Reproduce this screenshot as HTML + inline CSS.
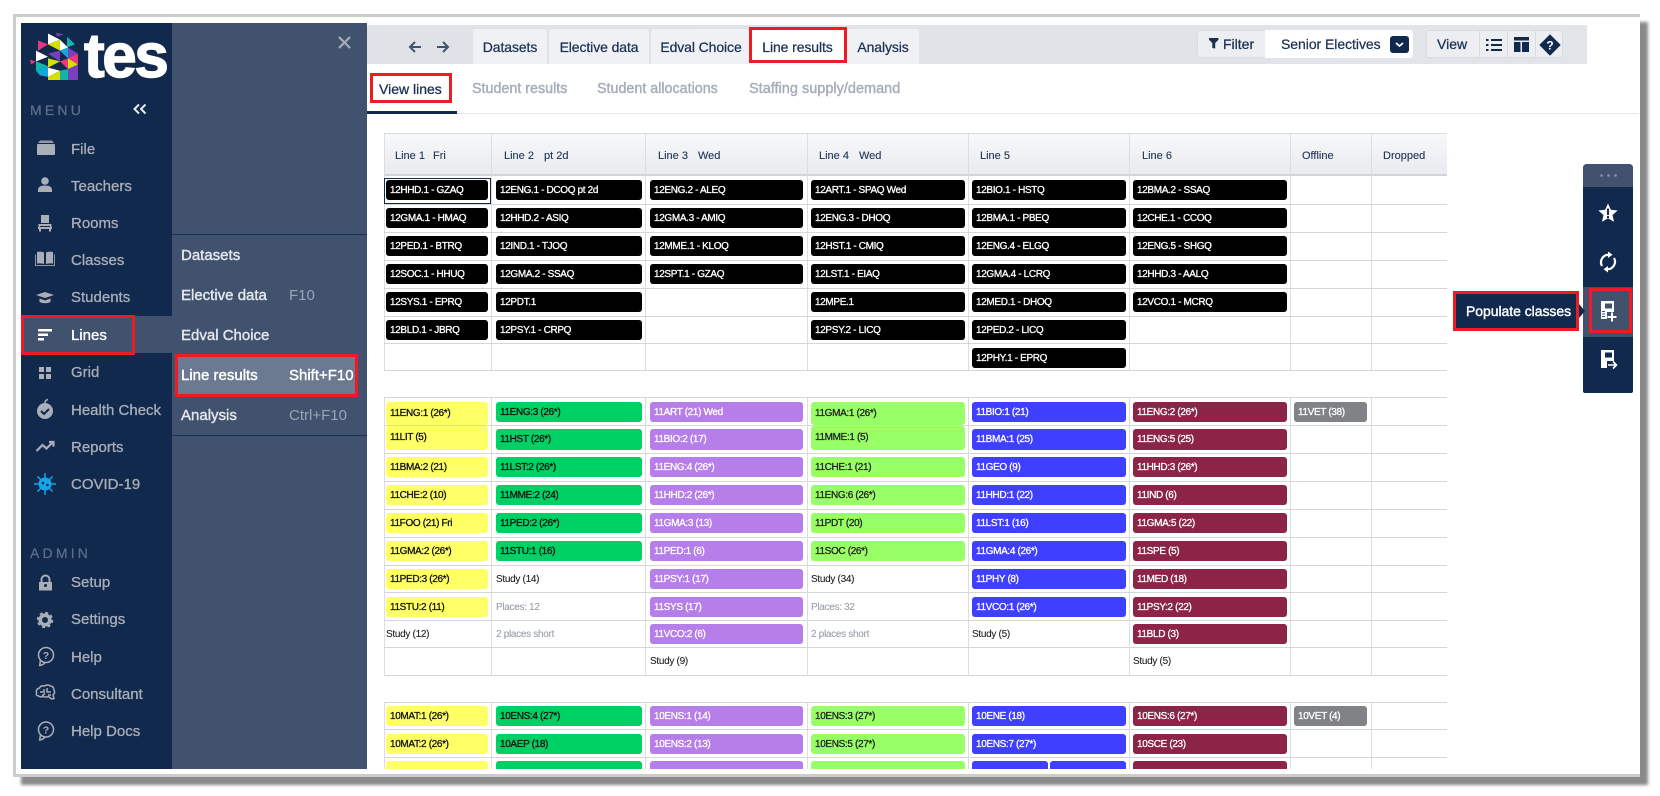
<!DOCTYPE html>
<html><head><meta charset="utf-8"><style>
html,body{margin:0;padding:0;background:#fff;width:1660px;height:796px;overflow:hidden;font-family:"Liberation Sans",sans-serif}
div,span,i,b{position:absolute;white-space:nowrap;box-sizing:border-box;font-style:normal;font-weight:normal}
svg{position:absolute;overflow:visible}
.frame{left:13px;top:14px;width:1627px;height:763px;background:#fff;border:3px solid #ccc;border-right:none;box-shadow:8px 8px 3px #8a8a8a}
.side{left:21px;top:23px;width:151px;height:746px;background:#11294d}
.sub{left:172px;top:23px;width:195px;height:746px;background:#41526e}
.n{left:71px;font-size:15px;line-height:20px;color:#a9aeb8;-webkit-text-stroke:.3px #a9aeb8}
.h{font-size:14px;letter-spacing:3.2px;color:#5f708b;left:30px;line-height:18px;-webkit-text-stroke:.2px #5f708b}
.s{left:181px;font-size:15px;line-height:20px;color:#e4e7ec;-webkit-text-stroke:.4px #e4e7ec}
.k{left:289px;font-size:15px;line-height:20px;color:#9aa5b6}
.red{border:3px solid #ed1c24;background:none}
.tab{top:29px;height:35px;background:#eff1f4;border-radius:3px 3px 0 0;font-size:14px;letter-spacing:-.1px;line-height:36px;text-align:center;color:#1b3054;-webkit-text-stroke:.25px #1b3054}
.st{top:79px;font-size:14.3px;line-height:20px;color:#a5adba;-webkit-text-stroke:.4px #a5adba}
.tb{font-size:14px;line-height:28px;color:#1b3054;-webkit-text-stroke:.25px #1b3054;top:30px}
.clip{left:384px;top:133px;width:1063px;height:636px;overflow:hidden}
.hd{left:0;top:0;width:1063px;height:43px;background:linear-gradient(#f7f8f9,#e9ebef);border-top:1px solid #ddd;border-bottom:2px solid #d3d5d9}
.hd span{top:12px;font-size:11px;line-height:20px;color:#1b3054;-webkit-text-stroke:.1px #1b3054}
.v{width:1px;background:#ddd}
.l{left:0;width:1063px;height:1px;background:#d6d6d6}
.p{height:20px;border-radius:3px;font-size:10px;letter-spacing:-.35px;line-height:21px;padding-left:4px;-webkit-text-stroke:.3px currentColor}
.t{height:20px;font-size:10px;letter-spacing:-.3px;line-height:21px;color:#222;-webkit-text-stroke:.1px currentColor}
.g{color:#9aa0a8}
.c1{left:2px;width:102px}.c2{left:112px;width:146px}.c3{left:266px;width:153px}.c4{left:427px;width:154px}.c5{left:588px;width:154px}.c6{left:749px;width:154px}.c7{left:910px;width:73px}
.K{background:#000;color:#fff}.Y{background:#ffff66;color:#111}.G{background:#00d164;color:#111}.U{background:#b67ee8;color:#fff}.L{background:#99ff66;color:#222}.B{background:#3f3fff;color:#fff}.M{background:#8b2447;color:#fff}.A{background:#808285;color:#fff}
</style></head><body>
<div class="frame"></div>
<div class="side"></div><div class="sub"></div>
<div style="left:172px;top:234px;width:195px;height:1px;background:#1a2f52"></div>
<div style="left:172px;top:435px;width:195px;height:1px;background:#1a2f52"></div>

<!-- logo -->
<svg style="left:30px;top:32px" width="48" height="48" viewBox="0 0 48 62" preserveAspectRatio="none">
<polygon points="18,2 30,10 18,16" fill="#fff"/><polygon points="26,1 34,3 27,6" fill="#7a3fc0"/>
<polygon points="37,6 45,16 37,20" fill="#12b5a8"/><polygon points="8,11 18,16 8,24" fill="#e8397f"/>
<polygon points="18,16 30,10 30,24" fill="#d6e000"/><polygon points="30,10 38,20 30,24" fill="#fff"/>
<polygon points="38,20 48,28 38,34" fill="#7a3fc0"/><polygon points="30,24 38,20 38,34" fill="#12a8d8"/>
<polygon points="6,24 18,32 6,38" fill="#fff"/><polygon points="18,28 30,24 30,38" fill="#7a3fc0"/>
<polygon points="38,34 48,28 48,42" fill="#e8397f"/>
<polygon points="0,36 6,38 1,42" fill="#e8397f"/><polygon points="6,38 18,44 6,50" fill="#12b5a8"/>
<polygon points="18,34 30,38 18,46" fill="#d6e000"/><polygon points="30,38 38,34 38,48" fill="#e8397f"/>
<polygon points="38,34 48,42 38,48" fill="#d6e000"/><polygon points="6,50 18,44 18,58 10,56" fill="#12a8d8"/>
<polygon points="18,46 30,50 18,58" fill="#fff"/><polygon points="30,50 38,48 38,62 30,62" fill="#12b5a8"/>
<polygon points="38,48 48,42 48,62 38,62" fill="#7a3fc0"/><polygon points="18,58 30,50 30,62 18,62" fill="#d6e000"/>
</svg>
<div style="left:84px;top:24px;font-size:62px;font-weight:bold;line-height:66px;color:#fff;letter-spacing:-2.4px;-webkit-text-stroke:1.4px #fff">tes</div>

<div class="h" style="top:101px">MENU</div>
<svg style="left:133px;top:103px" width="14" height="12" fill="none" stroke="#e8eaee" stroke-width="2"><path d="M6 1.500 1.500 6 6 10.500M12.500 1.500 8 6l4.500 4.500"/></svg>

<div style="left:21px;top:316px;width:151px;height:37px;background:#41526e"></div>

<div class="n" style="top:140px">File</div>
<div class="n" style="top:177px">Teachers</div>
<div class="n" style="top:214px">Rooms</div>
<div class="n" style="top:251px">Classes</div>
<div class="n" style="top:288px">Students</div>
<div class="n" style="top:326px;color:#fff;-webkit-text-stroke:.35px #fff">Lines</div>
<div class="n" style="top:363px">Grid</div>
<div class="n" style="top:401px">Health Check</div>
<div class="n" style="top:438px">Reports</div>
<div class="n" style="top:475px">COVID-19</div>
<div class="h" style="top:544px">ADMIN</div>
<div class="n" style="top:573px">Setup</div>
<div class="n" style="top:610px">Settings</div>
<div class="n" style="top:648px">Help</div>
<div class="n" style="top:685px">Consultant</div>
<div class="n" style="top:722px">Help Docs</div>

<svg style="left:0;top:0" width="172" height="769" fill="#a9aeb8">
<!-- file --><path d="M37 145q0-1 1-1h16q1 0 1 1v9q0 1-1 1H38q-1 0-1-1z"/><path d="M38 143l2-2.500h12l2 2.500z" opacity=".85"/>
<!-- teachers --><circle cx="45" cy="181" r="3.800"/><path d="M38 192v-2q0-4.500 7-4.500t7 4.500v2z"/>
<!-- rooms --><path d="M41 215h8v8h-8zM40 224h10v2h-10zM38 227h14v2h-14zM39 229h2v2.500h-2zM49 229h2v2.500h-2zM38.500 224h1.500v3h-1.500zM50 224h1.500v3H50z"/>
<!-- classes --><path d="M37 252q4-1 7 .5V264q-3-1-7-.5zM53 252q-4-1-7 .5V264q3-1 7-.5z"/><path d="M35.500 254.500v11h8.500M54.500 254.500v11H46" fill="none" stroke="#8f95a1" stroke-width="1"/><path d="M44 265.500h2" stroke="#8f95a1"/>
<!-- students --><path d="M36 295l9-3 9 3-9 3z"/><path d="M39.500 298.500l5.500 2 5.500-2v3.500q-5.500 2.500-11 0z"/>
<!-- lines --><path fill="#fff" d="M38 329h14v2.500H38zM38 333.500h10V336H38zM38 338h6v2.500h-6z"/>
<!-- grid --><path d="M39 367h5v5h-5zM46 367h5v5h-5zM39 374h5v5h-5zM46 374h5v5h-5z"/>
<!-- health --><circle cx="45" cy="411" r="8"/><path d="M45 403q0-3 3-3.500" stroke="#a9aeb8" fill="none" stroke-width="1.500"/><path d="M41 411l3 3 5-5" stroke="#11294d" fill="none" stroke-width="2"/>
<!-- reports --><path d="M36.500 451l6-6 4 3.500 6-6M49 442h4.500v4.500" fill="none" stroke="#a9aeb8" stroke-width="2.200"/>
<!-- covid --><g stroke="#14a6e8" stroke-width="1.500"><path d="M45 473v22M34 484h22M37.500 476.500l15 15M52.500 476.500l-15 15"/></g><circle cx="45" cy="484" r="6.500" fill="#14a6e8"/><circle cx="43" cy="483" r="1.300" fill="#11294d"/><circle cx="47.500" cy="485" r="1.300" fill="#11294d"/>
<!-- setup --><path d="M39 582h13v8.500H39z"/><path d="M41.500 582v-2.500a4 4 0 0 1 8 0V582" fill="none" stroke="#a9aeb8" stroke-width="2"/><circle cx="45.500" cy="585.500" r="1.500" fill="#11294d"/>
<!-- settings --><circle cx="45" cy="620" r="4.800" fill="none" stroke="#a9aeb8" stroke-width="3.600"/><circle cx="45" cy="620" r="7.300" fill="none" stroke="#a9aeb8" stroke-width="1.800" stroke-dasharray="3 2.730"/>
<!-- help --><g fill="none" stroke="#a9aeb8" stroke-width="1.500"><circle cx="46" cy="655" r="7.500"/><path d="M40.500 660l-.800 5.500q3.500-.5 5.500-3"/></g><text x="46" y="659" font-size="10.500" font-weight="bold" text-anchor="middle" font-family="Liberation Sans">?</text>
<!-- consultant --><g fill="none" stroke="#a9aeb8" stroke-width="1.500"><path d="M36.500 693q-1-4 3-5 1.500-3 5-2 3-2 6 0 3.500 .5 3.500 4 1.500 3-1 5l1 3.500-2.500 .5-3-2.500q-3 1-5 0-3 1-5-.5-3-.5-2-3z"/><path d="M40 692h4v-3M47 688v4h4M42 696l3-2.500M48 695h3"/></g>
<!-- help docs --><g fill="none" stroke="#a9aeb8" stroke-width="1.500"><circle cx="46" cy="729.500" r="7.500"/><path d="M40.500 734.500l-.800 5.500q3.500-.5 5.500-3"/></g><text x="46" y="733.500" font-size="10.500" font-weight="bold" text-anchor="middle" font-family="Liberation Sans">?</text>
</svg>

<div class="red" style="left:21px;top:315px;width:114px;height:40px"></div>

<svg style="left:338px;top:36px" width="13" height="13" stroke="#a5adba" stroke-width="2.200" fill="none"><path d="M1 1l11 11M12 1L1 12"/></svg>

<div class="s" style="top:246px">Datasets</div>
<div class="s" style="top:286px">Elective data</div><div class="k" style="top:286px">F10</div>
<div class="s" style="top:326px">Edval Choice</div>
<div style="left:175px;top:354px;width:183px;height:43px;background:#6b7a91"></div>
<div class="s" style="top:366px;color:#fff;-webkit-text-stroke:.4px #fff">Line results</div><div class="k" style="top:366px;color:#fff;-webkit-text-stroke:.4px #fff">Shift+F10</div>
<div class="red" style="left:175px;top:354px;width:183px;height:43px"></div>
<div class="s" style="top:406px">Analysis</div><div class="k" style="top:406px">Ctrl+F10</div>

<!-- top bar -->
<div style="left:367px;top:25px;width:1220px;height:39px;background:linear-gradient(90deg,#dfe2e7,#e1e4e9)"></div>
<svg style="left:408px;top:40px" width="42" height="14" fill="none" stroke="#42526e" stroke-width="2"><path d="M13 7H2M7 2 2 7l5 5M29 7h11M35 2l5 5-5 5"/></svg>
<div class="tab" style="left:473px;width:74px">Datasets</div>
<div class="tab" style="left:549px;width:100px">Elective data</div>
<div class="tab" style="left:651px;width:98px;padding-left:2px">Edval Choice</div>
<div class="tab" style="left:749px;width:97px;background:#fff">Line results</div>
<div class="tab" style="left:847px;width:72px">Analysis</div>
<div class="red" style="left:749px;top:27px;width:98px;height:36px"></div>

<div style="left:1197px;top:30px;width:69px;height:28px;background:#eceef1;border:1px solid #d8dbe0;border-radius:3px 0 0 3px"></div>
<div style="left:1265px;top:30px;width:148px;height:28px;background:#fff;border-radius:0 3px 3px 0"></div>
<svg style="left:1209px;top:38px" width="10" height="11" fill="#1b3054"><path d="M0 0h9.500v1.800L6.200 5v5.500L3.300 10V5L0 1.800z"/></svg>
<div class="tb" style="left:1223px">Filter</div>
<div class="tb" style="left:1281px;letter-spacing:-.05px">Senior Electives</div>
<div style="left:1390px;top:36px;width:19px;height:17px;background:#11294d;border-radius:3px"></div>
<svg style="left:1395px;top:42px" width="9" height="6" fill="none" stroke="#fff" stroke-width="1.800"><path d="M1 1l3.500 3L8 1"/></svg>
<div style="left:1426px;top:30px;width:137px;height:28px;background:#eceef1;border:1px solid #d8dbe0;border-radius:3px"></div>
<div style="left:1479px;top:30px;width:1px;height:28px;background:#d8dbe0"></div>
<div style="left:1507px;top:30px;width:1px;height:28px;background:#d8dbe0"></div>
<div style="left:1535px;top:30px;width:1px;height:28px;background:#d8dbe0"></div>
<div class="tb" style="left:1437px">View</div>
<svg style="left:1486px;top:38px" width="16" height="14" fill="#11294d"><path d="M5 1h11v2H5zM5 6h11v2H5zM5 11h11v2H5zM0 1h2.500v2H0zM0 6h2.500v2H0zM0 11h2.500v2H0z"/></svg>
<svg style="left:1514px;top:37px" width="15" height="15" fill="#11294d"><path d="M0 0h15v3.500H0zM0 5h6.500v10H0zM8 5h7v10H8z"/></svg>
<svg style="left:1540px;top:35px" width="20" height="20"><path d="M10 0l10 10-10 10L0 10z" fill="#11294d" stroke="#11294d" stroke-linejoin="round"/><text x="10" y="14.500" font-size="12" font-weight="bold" fill="#fff" text-anchor="middle" font-family="Liberation Sans">?</text></svg>

<!-- sub tabs -->
<div class="st" style="left:379px;font-size:14px;color:#1b3054;-webkit-text-stroke:.3px #1b3054">View lines</div>
<div class="st" style="left:472px">Student results</div>
<div class="st" style="left:597px">Student allocations</div>
<div class="st" style="left:749px;font-size:14.5px">Staffing supply/demand</div>
<div style="left:367px;top:113px;width:1272px;height:1px;background:#e4e6ea"></div>
<div style="left:367px;top:111px;width:90px;height:3px;background:#11294d"></div>
<div class="red" style="left:370px;top:73px;width:82px;height:30px"></div>

<!-- tables -->
<div class="clip">
<div class="hd">
<span style="left:11px">Line 1</span><span style="left:49px">Fri</span>
<span style="left:120px">Line 2</span><span style="left:160px">pt 2d</span>
<span style="left:274px">Line 3</span><span style="left:314px">Wed</span>
<span style="left:435px">Line 4</span><span style="left:475px">Wed</span>
<span style="left:596px">Line 5</span>
<span style="left:758px">Line 6</span>
<span style="left:918px">Offline</span>
<span style="left:999px">Dropped</span>
</div>
<!-- vertical lines -->
<div class="v" style="left:0;top:0;height:238px"></div>
<div class="v" style="left:107px;top:0;height:238px"></div><div class="v" style="left:261px;top:0;height:238px"></div><div class="v" style="left:423px;top:0;height:238px"></div><div class="v" style="left:584px;top:0;height:238px"></div><div class="v" style="left:745px;top:0;height:238px"></div><div class="v" style="left:906px;top:0;height:238px"></div><div class="v" style="left:987px;top:0;height:238px"></div>
<div class="v" style="left:0;top:264px;height:278px"></div>
<div class="v" style="left:107px;top:264px;height:278px"></div><div class="v" style="left:261px;top:264px;height:278px"></div><div class="v" style="left:423px;top:264px;height:278px"></div><div class="v" style="left:584px;top:264px;height:278px"></div><div class="v" style="left:745px;top:264px;height:278px"></div><div class="v" style="left:906px;top:264px;height:278px"></div><div class="v" style="left:987px;top:264px;height:278px"></div>
<div class="v" style="left:0;top:569px;height:67px"></div>
<div class="v" style="left:107px;top:569px;height:67px"></div><div class="v" style="left:261px;top:569px;height:67px"></div><div class="v" style="left:423px;top:569px;height:67px"></div><div class="v" style="left:584px;top:569px;height:67px"></div><div class="v" style="left:745px;top:569px;height:67px"></div><div class="v" style="left:906px;top:569px;height:67px"></div><div class="v" style="left:987px;top:569px;height:67px"></div>
<!-- horizontal lines -->
<div class="l" style="top:71px"></div><div class="l" style="top:99px"></div><div class="l" style="top:127px"></div><div class="l" style="top:155px"></div><div class="l" style="top:183px"></div><div class="l" style="top:210px"></div><div class="l" style="top:237px"></div>
<div class="l" style="top:264px"></div><div class="l" style="top:292px"></div><div class="l" style="top:320px"></div><div class="l" style="top:348px"></div><div class="l" style="top:376px"></div><div class="l" style="top:404px"></div><div class="l" style="top:432px"></div><div class="l" style="top:459px"></div><div class="l" style="top:487px"></div><div class="l" style="top:514px"></div><div class="l" style="top:542px"></div>
<div class="l" style="top:569px"></div><div class="l" style="top:596px"></div><div class="l" style="top:624px"></div>

<!-- table 1 -->
<div style="left:0;top:45px;width:107px;height:26px;border:1px solid #11294d"></div>
<div class="p K c1" style="top:47px">12HHD.1 - GZAQ</div><div class="p K c2" style="top:47px">12ENG.1 - DCOQ pt 2d</div><div class="p K c3" style="top:47px">12ENG.2 - ALEQ</div><div class="p K c4" style="top:47px">12ART.1 - SPAQ Wed</div><div class="p K c5" style="top:47px">12BIO.1 - HSTQ</div><div class="p K c6" style="top:47px">12BMA.2 - SSAQ</div>
<div class="p K c1" style="top:75px">12GMA.1 - HMAQ</div><div class="p K c2" style="top:75px">12HHD.2 - ASIQ</div><div class="p K c3" style="top:75px">12GMA.3 - AMIQ</div><div class="p K c4" style="top:75px">12ENG.3 - DHOQ</div><div class="p K c5" style="top:75px">12BMA.1 - PBEQ</div><div class="p K c6" style="top:75px">12CHE.1 - CCOQ</div>
<div class="p K c1" style="top:103px">12PED.1 - BTRQ</div><div class="p K c2" style="top:103px">12IND.1 - TJOQ</div><div class="p K c3" style="top:103px">12MME.1 - KLOQ</div><div class="p K c4" style="top:103px">12HST.1 - CMIQ</div><div class="p K c5" style="top:103px">12ENG.4 - ELGQ</div><div class="p K c6" style="top:103px">12ENG.5 - SHGQ</div>
<div class="p K c1" style="top:131px">12SOC.1 - HHUQ</div><div class="p K c2" style="top:131px">12GMA.2 - SSAQ</div><div class="p K c3" style="top:131px">12SPT.1 - GZAQ</div><div class="p K c4" style="top:131px">12LST.1 - EIAQ</div><div class="p K c5" style="top:131px">12GMA.4 - LCRQ</div><div class="p K c6" style="top:131px">12HHD.3 - AALQ</div>
<div class="p K c1" style="top:159px">12SYS.1 - EPRQ</div><div class="p K c2" style="top:159px">12PDT.1</div><div class="p K c4" style="top:159px">12MPE.1</div><div class="p K c5" style="top:159px">12MED.1 - DHOQ</div><div class="p K c6" style="top:159px">12VCO.1 - MCRQ</div>
<div class="p K c1" style="top:187px">12BLD.1 - JBRQ</div><div class="p K c2" style="top:187px">12PSY.1 - CRPQ</div><div class="p K c4" style="top:187px">12PSY.2 - LICQ</div><div class="p K c5" style="top:187px">12PED.2 - LICQ</div>
<div class="p K c5" style="top:215px">12PHY.1 - EPRQ</div>

<!-- table 2 -->
<div class="p Y c1" style="top:269px;height:23px;line-height:24px">11ENG:1 (26*)</div><div class="p G c2" style="top:269px">11ENG:3 (26*)</div><div class="p U c3" style="top:269px">11ART (21) Wed</div><div class="p L c4" style="top:269px;height:23px;line-height:24px">11GMA:1 (26*)</div><div class="p B c5" style="top:269px">11BIO:1 (21)</div><div class="p M c6" style="top:269px">11ENG:2 (26*)</div><div class="p A c7" style="top:269px">11VET (38)</div>
<div class="p Y c1" style="top:293px;height:24px;line-height:24px">11LIT (5)</div><div class="p G c2" style="top:296px;height:21px;line-height:22px">11HST (26*)</div><div class="p U c3" style="top:296px;height:21px;line-height:22px">11BIO:2 (17)</div><div class="p L c4" style="top:293px;height:24px;line-height:24px">11MME:1 (5)</div><div class="p B c5" style="top:296px;height:21px;line-height:22px">11BMA:1 (25)</div><div class="p M c6" style="top:296px;height:21px;line-height:22px">11ENG:5 (25)</div>
<div class="p Y c1" style="top:324px">11BMA:2 (21)</div><div class="p G c2" style="top:324px">11LST:2 (26*)</div><div class="p U c3" style="top:324px">11ENG:4 (26*)</div><div class="p L c4" style="top:324px">11CHE:1 (21)</div><div class="p B c5" style="top:324px">11GEO (9)</div><div class="p M c6" style="top:324px">11HHD:3 (26*)</div>
<div class="p Y c1" style="top:352px">11CHE:2 (10)</div><div class="p G c2" style="top:352px">11MME:2 (24)</div><div class="p U c3" style="top:352px">11HHD:2 (26*)</div><div class="p L c4" style="top:352px">11ENG:6 (26*)</div><div class="p B c5" style="top:352px">11HHD:1 (22)</div><div class="p M c6" style="top:352px">11IND (6)</div>
<div class="p Y c1" style="top:380px">11FOO (21) Fri</div><div class="p G c2" style="top:380px">11PED:2 (26*)</div><div class="p U c3" style="top:380px">11GMA:3 (13)</div><div class="p L c4" style="top:380px">11PDT (20)</div><div class="p B c5" style="top:380px">11LST:1 (16)</div><div class="p M c6" style="top:380px">11GMA:5 (22)</div>
<div class="p Y c1" style="top:408px">11GMA:2 (26*)</div><div class="p G c2" style="top:408px">11STU:1 (16)</div><div class="p U c3" style="top:408px">11PED:1 (6)</div><div class="p L c4" style="top:408px">11SOC (26*)</div><div class="p B c5" style="top:408px">11GMA:4 (26*)</div><div class="p M c6" style="top:408px">11SPE (5)</div>
<div class="p Y c1" style="top:436px">11PED:3 (26*)</div><div class="t c2" style="top:436px">Study (14)</div><div class="p U c3" style="top:436px">11PSY:1 (17)</div><div class="t c4" style="top:436px">Study (34)</div><div class="p B c5" style="top:436px">11PHY (8)</div><div class="p M c6" style="top:436px">11MED (18)</div>
<div class="p Y c1" style="top:464px">11STU:2 (11)</div><div class="t g c2" style="top:464px">Places: 12</div><div class="p U c3" style="top:464px">11SYS (17)</div><div class="t g c4" style="top:464px">Places: 32</div><div class="p B c5" style="top:464px">11VCO:1 (26*)</div><div class="p M c6" style="top:464px">11PSY:2 (22)</div>
<div class="t c1" style="top:491px">Study (12)</div><div class="t g c2" style="top:491px">2 places short</div><div class="p U c3" style="top:491px">11VCO:2 (6)</div><div class="t g c4" style="top:491px">2 places short</div><div class="t c5" style="top:491px">Study (5)</div><div class="p M c6" style="top:491px">11BLD (3)</div>
<div class="t c3" style="top:518px">Study (9)</div><div class="t c6" style="top:518px">Study (5)</div>

<!-- table 3 -->
<div class="p Y c1" style="top:573px">10MAT:1 (26*)</div><div class="p G c2" style="top:573px">10ENS:4 (27*)</div><div class="p U c3" style="top:573px">10ENS:1 (14)</div><div class="p L c4" style="top:573px">10ENS:3 (27*)</div><div class="p B c5" style="top:573px">10ENE (18)</div><div class="p M c6" style="top:573px">10ENS:6 (27*)</div><div class="p A c7" style="top:573px">10VET (4)</div>
<div class="p Y c1" style="top:601px">10MAT:2 (26*)</div><div class="p G c2" style="top:601px">10AEP (18)</div><div class="p U c3" style="top:601px">10ENS:2 (13)</div><div class="p L c4" style="top:601px">10ENS:5 (27*)</div><div class="p B c5" style="top:601px">10ENS:7 (27*)</div><div class="p M c6" style="top:601px">10SCE (23)</div>
<div class="p Y c1" style="top:628px"></div><div class="p G c2" style="top:628px"></div><div class="p U c3" style="top:628px"></div><div class="p L c4" style="top:628px"></div><div class="p B" style="top:628px;left:588px;width:76px"></div><div class="p B" style="top:628px;left:666px;width:76px"></div><div class="p M c6" style="top:628px"></div>
</div>

<!-- right panel -->
<div style="left:1583px;top:164px;width:50px;height:229px;background:#11294d;border-radius:4px 4px 2px 2px"></div>
<div style="left:1583px;top:164px;width:50px;height:23px;background:#41526e;border-radius:4px 4px 0 0"></div>
<svg style="left:1600px;top:174px" width="17" height="3" fill="#8795ab"><circle cx="1.500" cy="1.500" r="1.300"/><circle cx="8.500" cy="1.500" r="1.300"/><circle cx="15.500" cy="1.500" r="1.300"/></svg>
<div style="left:1583px;top:287px;width:50px;height:50px;background:#41526e"></div>
<svg style="left:1583px;top:187px" width="50" height="206" fill="#fff">
<path d="M25 16.500l2.800 6.300 6.900.7-5.200 4.500 1.500 6.800-6-3.500-6 3.500 1.500-6.800-5.200-4.500 6.900-.7z"/><path d="M24 21.500h2v6.500h-2zM24 29h2v2h-2z" fill="#11294d"/>
<g fill="none" stroke="#fff" stroke-width="2.200"><path d="M19 79a7.500 7.500 0 0 1 7-11.200M31 71a7.500 7.500 0 0 1-7 11.200"/></g><path d="M25 64.500l4.500 3.300L25 71zM25 85.500l-4.500-3.300L25 79z"/>
<path d="M18 114h13v11h-7v7h-6z"/><path d="M22 116.500h7v5h-7z" fill="#41526e"/><path d="M19 124.500h3M19 127h3M19 129.500h3" stroke="#41526e"/><path d="M29 125.500v9M24.500 130h9" stroke="#fff" stroke-width="2" fill="none"/>
<path d="M18 163h13v11h-7v7h-6z"/><path d="M22 165.500h7v5h-7z" fill="#11294d"/><path d="M25 178h8M30 174.500l3.500 3.500-3.500 3.500" stroke="#fff" stroke-width="1.600" fill="none"/>
</svg>
<div class="red" style="left:1589px;top:288px;width:43px;height:45px"></div>
<div style="left:1453px;top:291px;width:126px;height:40px;background:#11294d;border:3px solid #ed1c24;color:#fff;font-size:14px;letter-spacing:-.05px;line-height:34px;padding-left:10px;-webkit-text-stroke:.4px #fff">Populate classes</div>
<svg style="left:1579px;top:304px" width="6" height="14" fill="#11294d"><path d="M0 0l6 7-6 7z"/></svg>
</body></html>
